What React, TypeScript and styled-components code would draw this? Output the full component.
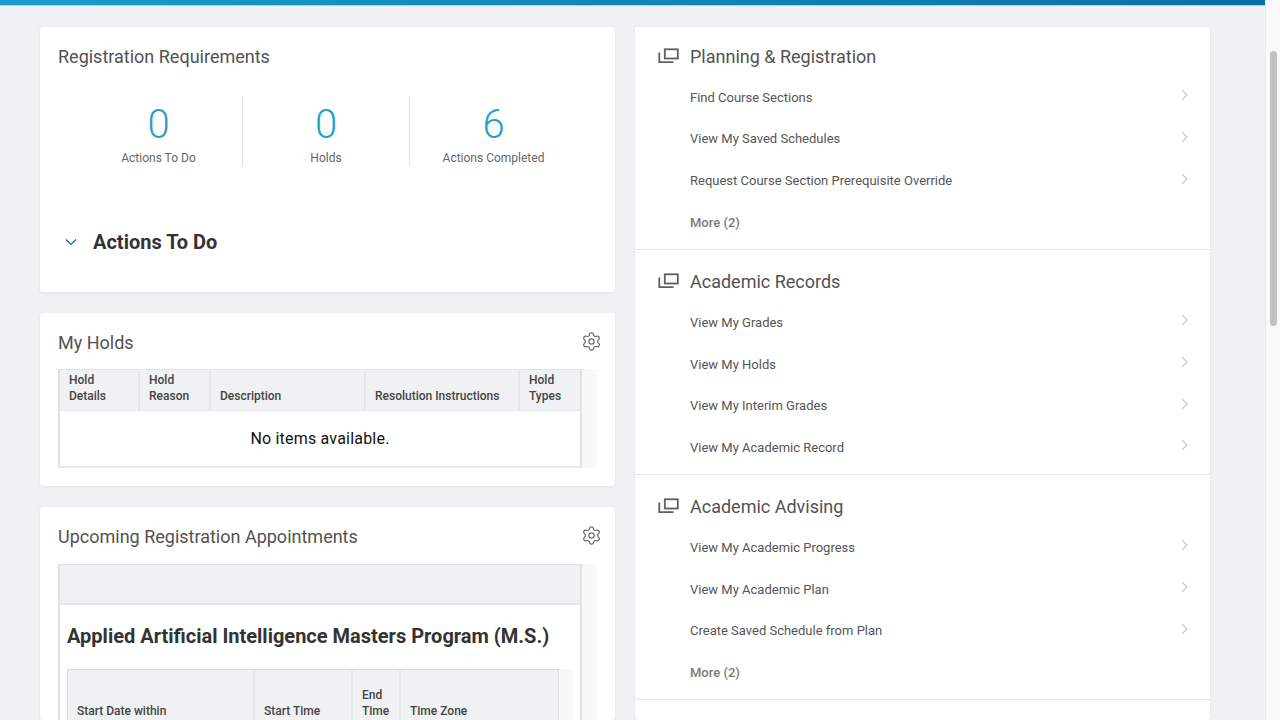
import React from 'react';
import { Settings } from 'lucide-react';
import styled, { createGlobalStyle } from 'styled-components';

const GlobalStyle = createGlobalStyle`
  html, body {
    height: 100%;
    margin: 0;
    overflow: hidden;
    background: #f0f1f2;
    font-family: Roboto, "Liberation Sans", sans-serif;
  }
  * { box-sizing: border-box; }
`;

const Shell = styled.div`
  display: flex;
  width: 1280px;
  height: 720px;
  overflow: hidden;
`;

const Main = styled.div`
  display: flex;
  flex: 1;
  flex-direction: column;
  min-width: 0;
`;

const TopBar = styled.div`
  flex-shrink: 0;
  height: 6px;
  border-bottom: 1px solid #a9d3e8;
  background: linear-gradient(90deg, #1c9ad1, #0672a6);
`;

const Columns = styled.div`
  display: grid;
  flex: 1;
  grid-template-columns: 575px 575px;
  gap: 20px;
  min-height: 0;
  padding: 21px 0 0 40px;
`;

const Column = styled.div`
  display: flex;
  flex-direction: column;
  gap: 21px;
  min-height: 0;
`;

const Card = styled.section<{ $height?: number }>`
  flex: ${(p) => (p.$height ? `0 0 ${p.$height}px` : '1')};
  min-height: 0;
  padding: 0 18px;
  border-radius: 3px;
  background: #fff;
  box-shadow: 0 1px 3px rgba(0, 0, 0, 0.07);
  overflow: hidden;
`;

const CardHeader = styled.header<{ $height: number }>`
  display: flex;
  align-items: flex-start;
  justify-content: space-between;
  height: ${(p) => p.$height}px;
  padding-top: 19px;
`;

const CardTitle = styled.h2`
  margin: 0;
  color: #525252;
  font-size: 18px;
  font-weight: 400;
`;

const Gear = styled(Settings)`
  margin: -1px -5px 0 0;
  color: #6a6a6a;
`;

const Stats = styled.div`
  display: grid;
  grid-template-columns: 168px 167px 167px;
  margin: 9px 0 0 17px;
`;

const Stat = styled.div`
  display: flex;
  flex-direction: column;
  align-items: center;
  height: 70px;
  border-right: 1px solid #dfe1e3;

  &:last-child {
    border-right: none;
  }
`;

const StatValue = styled.div`
  margin-top: 6px;
  color: #2a9fc6;
  font-size: 40px;
  font-weight: 350;
  line-height: 46px;
`;

const StatLabel = styled.div`
  margin-top: 2px;
  color: #666;
  font-size: 12px;
  line-height: 16px;
`;

const Disclosure = styled.div`
  display: flex;
  align-items: center;
  gap: 16px;
  margin: 59px 0 0 7px;
`;

const DisclosureTitle = styled.h3`
  margin: 0;
  color: #333;
  font-size: 20px;
  font-weight: 700;
  line-height: 34px;
`;

const TableFrame = styled.div<{ $track: number }>`
  display: flex;
  width: ${(p) => p.$track}px;
  background: #f8f8f8;
`;

const TableBody = styled.div<{ $width: number }>`
  width: ${(p) => p.$width}px;
  border: solid #e0e2e4;
  border-width: 1px 2px 0 2px;
  background: #fff;
`;

const HeaderRow = styled.div<{ $columns: string }>`
  display: grid;
  grid-template-columns: ${(p) => p.$columns};
  background: #f0f1f2;
`;

const HeaderCell = styled.div<{ $height: number; $inset: number }>`
  display: flex;
  align-items: flex-end;
  height: ${(p) => p.$height}px;
  padding: 0 4px 6px ${(p) => p.$inset}px;
  border-right: 2px solid #e5e7e9;
  color: #444;
  font-size: 12px;
  font-weight: 500;
  line-height: 16px;

  &:last-child {
    border-right: none;
  }
`;

const EmptyRow = styled.div`
  display: flex;
  align-items: center;
  justify-content: center;
  height: 58px;
  padding-bottom: 1px;
  border-top: 1px solid #e5e7e9;
  border-bottom: 2px solid #e5e7e9;
  color: #111;
  font-size: 16px;
  letter-spacing: 0.2px;
`;

const GroupBand = styled.div`
  height: 40px;
  border-bottom: 2px solid #e5e7e9;
  background: #f0f1f2;
`;

const ProgramTitle = styled.h3`
  margin: 0;
  padding: 15px 0 17px 7px;
  color: #333;
  font-size: 20px;
  font-weight: 700;
  line-height: 32px;
`;

const InnerFrame = styled.div`
  display: flex;
  width: 506px;
  margin-left: 7px;
  background: #f8f8f8;
`;

const InnerTable = styled.div`
  width: 492px;
  border: solid #d9dbdd;
  border-width: 1px 1px 0 1px;
`;

const LinksCard = styled(Card)`
  padding: 0;
`;

const SectionHeader = styled.header`
  display: flex;
  align-items: center;
  gap: 11px;
  height: 51.7px;
  margin-left: -32px;
  padding-top: 11px;
`;

const Section = styled.div`
  height: 225px;
  padding-left: 55px;
  border-bottom: 1px solid #e4e6e8;

  &:first-child {
    height: 223px;
  }

  &:first-child ${SectionHeader} {
    height: 49.55px;
    padding-top: 9px;
  }
`;

const LinkRow = styled.div`
  display: flex;
  align-items: center;
  justify-content: space-between;
  height: 41.6px;
  padding-right: 21px;
  color: #555;
  font-size: 13px;
`;

const MoreLink = styled(LinkRow)`
  color: #7b7b7b;
  font-weight: 500;
`;

const Chevron = styled.svg`
  width: 8px;
  height: 12px;
  margin-top: -4px;
  fill: none;
  stroke: #c6c8ca;
  stroke-width: 1.2;
`;

const ScrollTrack = styled.div`
  flex: 0 0 15px;
  padding: 51px 3px 0 4px;
  border-left: 1px solid #e8e9ea;
  background: #f9f9f9;
`;

const ScrollThumb = styled.div`
  height: 275px;
  border-radius: 4px;
  background: #c1c1c1;
`;

const StackIcon = () => (
  <svg width="21" height="16" viewBox="0 0 21 16" fill="none" stroke="#5f5f5f" strokeWidth="1.8">
    <rect x="6.8" y="1.3" width="13" height="9.2" />
    <path d="M1.3 4.5V14.2H15.5" />
  </svg>
);

const stats = [
  { value: '0', label: 'Actions To Do' },
  { value: '0', label: 'Holds' },
  { value: '6', label: 'Actions Completed' },
];

const holdColumns = [
  { label: ['Hold', 'Details'], inset: 9 },
  { label: ['Hold', 'Reason'], inset: 9 },
  { label: ['Description'], inset: 9 },
  { label: ['Resolution Instructions'], inset: 9 },
  { label: ['Hold', 'Types'], inset: 9 },
];

const appointmentColumns = [
  { label: ['Start Date within'], inset: 9 },
  { label: ['Start Time'], inset: 9 },
  { label: ['End', 'Time'], inset: 9 },
  { label: ['Time Zone'], inset: 9 },
];

const sections = [
  {
    title: 'Planning & Registration',
    links: ['Find Course Sections', 'View My Saved Schedules', 'Request Course Section Prerequisite Override'],
    more: 'More (2)',
  },
  {
    title: 'Academic Records',
    links: ['View My Grades', 'View My Holds', 'View My Interim Grades', 'View My Academic Record'],
  },
  {
    title: 'Academic Advising',
    links: ['View My Academic Progress', 'View My Academic Plan', 'Create Saved Schedule from Plan'],
    more: 'More (2)',
  },
];

const renderLabel = (lines: string[]) => (
  <div>
    {lines.map((line) => (
      <div key={line}>{line}</div>
    ))}
  </div>
);

export default function App() {
  return (
    <Shell>
      <GlobalStyle />
      <Main>
        <TopBar />
        <Columns>
          <Column>
            <Card $height={265}>
              <CardHeader $height={60}>
                <CardTitle>Registration Requirements</CardTitle>
              </CardHeader>
              <Stats>
                {stats.map((stat) => (
                  <Stat key={stat.label}>
                    <StatValue>{stat.value}</StatValue>
                    <StatLabel>{stat.label}</StatLabel>
                  </Stat>
                ))}
              </Stats>
              <Disclosure>
                <svg width="12" height="8" viewBox="0 0 12 8" fill="none" stroke="#0b62c4" strokeWidth="1.2">
                  <path d="M1 1.5L6 6.5L11 1.5" />
                </svg>
                <DisclosureTitle>Actions To Do</DisclosureTitle>
              </Disclosure>
            </Card>

            <Card $height={173}>
              <CardHeader $height={56}>
                <CardTitle>My Holds</CardTitle>
                <Gear size={21} strokeWidth={1.4} />
              </CardHeader>
              <TableFrame $track={539}>
                <TableBody $width={524}>
                  <HeaderRow $columns="80px 71px 155px 154px 1fr">
                    {holdColumns.map((column) => (
                      <HeaderCell key={column.label.join(' ')} $height={40} $inset={column.inset}>
                        {renderLabel(column.label)}
                      </HeaderCell>
                    ))}
                  </HeaderRow>
                  <EmptyRow>No items available.</EmptyRow>
                </TableBody>
              </TableFrame>
            </Card>

            <Card>
              <CardHeader $height={57}>
                <CardTitle>Upcoming Registration Appointments</CardTitle>
                <Gear size={21} strokeWidth={1.4} />
              </CardHeader>
              <TableFrame $track={539}>
                <TableBody $width={524}>
                  <GroupBand />
                  <ProgramTitle>Applied Artificial Intelligence Masters Program (M.S.)</ProgramTitle>
                  <InnerFrame>
                    <InnerTable>
                      <HeaderRow $columns="187px 98px 48px 1fr">
                        {appointmentColumns.map((column) => (
                          <HeaderCell key={column.label.join(' ')} $height={55} $inset={column.inset}>
                            {renderLabel(column.label)}
                          </HeaderCell>
                        ))}
                      </HeaderRow>
                    </InnerTable>
                  </InnerFrame>
                </TableBody>
              </TableFrame>
            </Card>
          </Column>

          <Column>
            <LinksCard>
              {sections.map((section) => (
                <Section key={section.title}>
                  <SectionHeader>
                    <StackIcon />
                    <CardTitle>{section.title}</CardTitle>
                  </SectionHeader>
                  {section.links.map((link) => (
                    <LinkRow key={link}>
                      {link}
                      <Chevron viewBox="0 0 8 12">
                        <path d="M1 1L6 6L1 11" />
                      </Chevron>
                    </LinkRow>
                  ))}
                  {section.more && <MoreLink>{section.more}</MoreLink>}
                </Section>
              ))}
            </LinksCard>
          </Column>
        </Columns>
      </Main>
      <ScrollTrack>
        <ScrollThumb />
      </ScrollTrack>
    </Shell>
  );
}
